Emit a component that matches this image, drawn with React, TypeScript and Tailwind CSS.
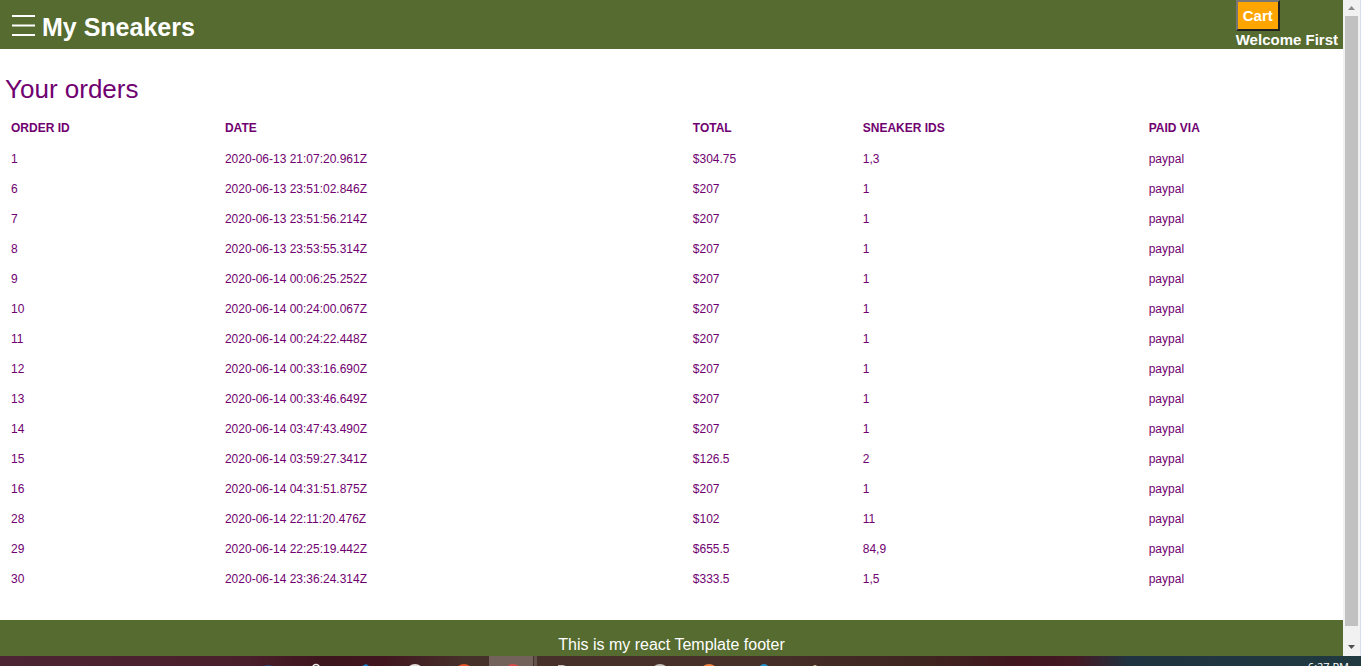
import React from "react";

type Order = { id: number; date: string; total: string; sneakers: string; via: string };

const orders: Order[] = [
  { id: 1, date: "2020-06-13 21:07:20.961Z", total: "$304.75", sneakers: "1,3", via: "paypal" },
  { id: 6, date: "2020-06-13 23:51:02.846Z", total: "$207", sneakers: "1", via: "paypal" },
  { id: 7, date: "2020-06-13 23:51:56.214Z", total: "$207", sneakers: "1", via: "paypal" },
  { id: 8, date: "2020-06-13 23:53:55.314Z", total: "$207", sneakers: "1", via: "paypal" },
  { id: 9, date: "2020-06-14 00:06:25.252Z", total: "$207", sneakers: "1", via: "paypal" },
  { id: 10, date: "2020-06-14 00:24:00.067Z", total: "$207", sneakers: "1", via: "paypal" },
  { id: 11, date: "2020-06-14 00:24:22.448Z", total: "$207", sneakers: "1", via: "paypal" },
  { id: 12, date: "2020-06-14 00:33:16.690Z", total: "$207", sneakers: "1", via: "paypal" },
  { id: 13, date: "2020-06-14 00:33:46.649Z", total: "$207", sneakers: "1", via: "paypal" },
  { id: 14, date: "2020-06-14 03:47:43.490Z", total: "$207", sneakers: "1", via: "paypal" },
  { id: 15, date: "2020-06-14 03:59:27.341Z", total: "$126.5", sneakers: "2", via: "paypal" },
  { id: 16, date: "2020-06-14 04:31:51.875Z", total: "$207", sneakers: "1", via: "paypal" },
  { id: 28, date: "2020-06-14 22:11:20.476Z", total: "$102", sneakers: "11", via: "paypal" },
  { id: 29, date: "2020-06-14 22:25:19.442Z", total: "$655.5", sneakers: "84,9", via: "paypal" },
  { id: 30, date: "2020-06-14 23:36:24.314Z", total: "$333.5", sneakers: "1,5", via: "paypal" },
];

function Header() {
  return (
    <header className="flex h-[49px] shrink-0 items-start justify-between bg-[#556b2f] pr-[5px] pl-3 text-white">
      <div className="flex items-start gap-[7px]">
        <button type="button" aria-label="Open menu" className="pt-[15px]">
          <svg width="23" height="21" viewBox="0 0 23 21" fill="white" className="block">
            <path d="M0 0h23v2H0zM0 9.500h23v2H0zM0 19h23v2H0z" />
          </svg>
        </button>
        <h1 className="pt-[9px] text-[25px] leading-9 font-bold">My Sneakers</h1>
      </div>
      <div className="text-[15px] font-bold">
        <button
          type="button"
          className="block h-[31px] border-2 border-t-[#767676] border-r-[#212121] border-b-[#212121] border-l-[#767676] bg-[#ffa500] px-[5px] leading-5"
        >
          Cart
        </button>
        <p className="leading-[18px]">Welcome First</p>
      </div>
    </header>
  );
}

function Orders() {
  return (
    <main className="flex-1 px-[5px] pt-6 pb-6 text-[#700070]">
      <h2 className="text-[26px] leading-8">Your orders</h2>
      <table className="mt-2 w-full table-fixed border-collapse text-left text-[12px] leading-4">
        <thead>
          <tr className="h-[31px]">
            <th className="w-[16.05%] px-1.5 pb-0.5">ORDER ID</th>
            <th className="w-[35.1%] px-1.5 pb-0.5">DATE</th>
            <th className="w-[12.75%] px-1.5 pb-0.5">TOTAL</th>
            <th className="w-[21.45%] px-1.5 pb-0.5">SNEAKER IDS</th>
            <th className="px-1.5 pb-0.5">PAID VIA</th>
          </tr>
        </thead>
        <tbody>
          {orders.map((o) => (
            <tr key={o.id} className="h-[30px]">
              <td className="px-1.5">{o.id}</td>
              <td className="px-1.5">{o.date}</td>
              <td className="px-1.5">{o.total}</td>
              <td className="px-1.5">{o.sneakers}</td>
              <td className="px-1.5">{o.via}</td>
            </tr>
          ))}
        </tbody>
      </table>
    </main>
  );
}

function ScrollRail() {
  return (
    <div className="flex w-[18px] shrink-0 flex-col items-center border-r border-[#d5dcec] bg-[#f1f1f1]">
      <svg width="17" height="16" viewBox="0 0 17 16" className="shrink-0">
        <path d="M5 10h7L8.500 6z" fill="#8b8b8b" />
      </svg>
      <div className="w-[13px] flex-1 bg-[#c1c1c1]" />
      <svg width="17" height="30" viewBox="0 0 17 30" className="shrink-0">
        <path d="M5 19h7l-3.500 4z" fill="#505050" />
      </svg>
    </div>
  );
}

function Taskbar() {
  return (
    <div className="flex h-[10px] shrink-0 items-start justify-between overflow-hidden bg-[linear-gradient(90deg,#4d2433_0%,#4a1f2c_18%,#3d151c_24%,#41151f_28%,#46302a_34%,#463028_55%,#3f2520_68%,#42151f_75%,#441924_79%,#203340_83%,#203a40_100%)]">
      <svg width="840" height="10" viewBox="0 0 840 10" className="shrink-0">
        <rect x="489" width="44" height="10" fill="#73615c" />
        <rect x="534" width="3" height="10" fill="#62504a" />
        <circle cx="268" cy="18" r="9" fill="#234274" />
        <circle cx="316" cy="12" r="3.500" fill="none" stroke="#eee" strokeWidth="1.500" />
        <path d="M362 10l4-2 3 2z" fill="#1680d0" />
        <circle cx="415" cy="17" r="9" fill="#e6dddd" />
        <circle cx="464" cy="17" r="9" fill="#e65428" />
        <circle cx="513" cy="17" r="9" fill="#d64c49" />
        <path d="M558 9h5l3 1h-8z" fill="#c9bfbc" />
        <circle cx="660" cy="17" r="9" fill="#c9c1bd" />
        <circle cx="709" cy="17" r="9" fill="#f48440" />
        <circle cx="764" cy="13" r="5" fill="#2590c8" />
        <circle cx="815" cy="11" r="2" fill="#d8c09b" />
      </svg>
      <time className="pt-[3px] pr-3 text-[11px] leading-4 text-white font-['Open_Sans',sans-serif]">6:27 PM</time>
    </div>
  );
}

export default function App() {
  return (
    <div className="flex min-h-screen flex-col bg-white font-['Liberation_Sans',Arial,sans-serif]">
      <div className="flex flex-1">
        <div className="flex min-w-0 flex-1 flex-col">
          <Header />
          <Orders />
          <footer className="h-9 shrink-0 bg-[#556b2f] pt-[13px] text-center text-[16px] leading-[23px] text-white">
            This is my react Template footer
          </footer>
        </div>
        <ScrollRail />
      </div>
      <Taskbar />
    </div>
  );
}
